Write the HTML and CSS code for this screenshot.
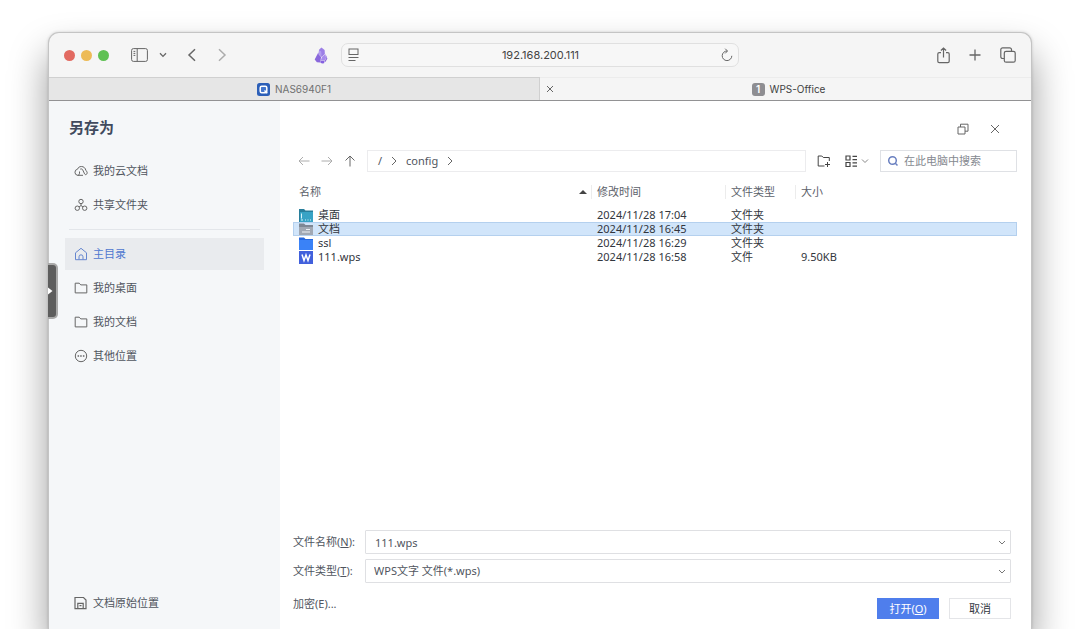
FILE: index.html
```html
<!DOCTYPE html>
<html lang="zh-CN">
<head>
<meta charset="utf-8">
<meta name="viewport" content="width=device-width, initial-scale=1">
<title>WPS-Office</title>
<link rel="stylesheet" href="styles.css">
</head>
<body>
<div class="window">
  <header class="toolbar">
    <div class="toolbar-left">
      <div class="lights"><span class="light red"></span><span class="light yellow"></span><span class="light green"></span></div>
      <button class="icon-btn side-toggle" aria-label="边栏"><svg width="17" height="14" viewBox="0 0 17 14"><rect x=".6" y=".6" width="15.8" height="12.8" rx="1.8"/><path d="M6.2 .6v12.8M2.5 3.4h1.8M2.5 5.4h1.8M2.5 7.4h1.8"/></svg></button>
      <button class="icon-btn side-menu" aria-label="标签页组"><svg width="8" height="6" viewBox="0 0 8 6"><path stroke-width="1.300" d="M1 1.200 4 4.400l3-3.200"/></svg></button>
      <button class="icon-btn nav-btn" aria-label="后退"><svg width="10" height="14" viewBox="0 0 10 14"><path stroke-width="1.500" d="M8 1.300 2 7l6 5.700"/></svg></button>
      <button class="icon-btn nav-btn dim" aria-label="前进"><svg width="10" height="14" viewBox="0 0 10 14"><path stroke-width="1.500" d="m2 1.300 6 5.700-6 5.700"/></svg></button>
      <button class="icon-btn crystal" aria-label="扩展"><svg width="14" height="17" viewBox="0 0 14 17"><path fill="#9c7fe6" d="M7.400.5 10.600 3l.3 4-3.200 3-3-3.200.3-4z"/><path fill="#8a68dc" d="m4.300 5.500.5 2 2.300 2.600-.9 5.500-3.300-.3L.7 12.500z"/><path fill="#b29cf0" d="m5 3.500 2.100.8.5 4.200L4.800 7z"/><path fill="#a88cec" d="m8 10 3.200-2.700 1 3.800-1.600 2.400-3.700-.4z"/><path fill="#8a68dc" d="m11.300 6.500 2.100 5-2 3.400-.8-.9 1.800-3z"/><path fill="#8560e0" d="m6.700 13.400 3.900.4-.5 2.500-2.100.3-1.700-1z"/></svg></button>
    </div>
    <div class="address">
      <svg class="line-icon" width="12" height="14" viewBox="0 0 12 14"><rect x="1" y="1" width="9" height="5.500"/><path d="M.5 9.500h10M.5 12.500h7"/></svg>
      <input class="address-input" type="text" aria-label="地址" value="192.168.200.111">
      <button class="icon-btn reload" aria-label="重新载入"><svg width="12" height="14" viewBox="0 0 12 14"><path d="M10.800 7.800A4.800 4.800 0 1 1 6.200 3M4.200.7 6.500 3 4.200 5.400"/></svg></button>
    </div>
    <div class="toolbar-right">
      <button class="icon-btn" aria-label="共享"><svg width="13" height="17" viewBox="0 0 13 17"><path stroke-width="1.200" d="M4 5.600H2.200A1.400 1.400 0 0 0 .8 7v7.200a1.400 1.400 0 0 0 1.400 1.400h8.600a1.400 1.400 0 0 0 1.400-1.400V7a1.400 1.400 0 0 0-1.400-1.400H9M6.500 10.500V1M3.900 3.500 6.500 1l2.600 2.500"/></svg></button>
      <button class="icon-btn" aria-label="新标签页"><svg width="12" height="12" viewBox="0 0 12 12"><path stroke-width="1.300" d="M6 .5v11M.5 6h11"/></svg></button>
      <button class="icon-btn" aria-label="标签页概览"><svg width="16" height="16" viewBox="0 0 16 16"><rect stroke-width="1.200" x="4.300" y="4.300" width="10.900" height="10.900" rx="1.800"/><path stroke-width="1.200" d="M4 11.500H2.600A1.800 1.800 0 0 1 .8 9.700V2.600A1.800 1.800 0 0 1 2.600.8h7.100a1.800 1.800 0 0 1 1.800 1.800V4"/></svg></button>
    </div>
  </header>

  <nav class="tabs" aria-label="标签页">
    <a class="tab idle" href="#nas"><svg width="13" height="13" viewBox="0 0 13 13"><rect width="13" height="13" rx="2.500" fill="#2c5fb8"/><rect x="3.200" y="3.200" width="6.600" height="6.600" rx="1.500" fill="#4476cc" stroke="#fff" stroke-width="1.500"/><path d="m7.500 7.500 2.800 2.800" stroke="#fff" stroke-width="1.500"/></svg><span>NAS6940F1</span></a>
    <div class="tab current">
      <button class="icon-btn tab-close" aria-label="关闭标签页"><svg width="8" height="8" viewBox="0 0 8 8"><path d="m1 1 6 6M7 1 1 7"/></svg></button>
      <a class="tab-link" href="#wps"><span class="badge">1</span><span>WPS-Office</span></a>
    </div>
  </nav>

  <div class="dialog">
    <aside class="sidebar">
      <h1 class="title">另存为</h1>
      <nav class="places" aria-label="位置">
        <a class="place" href="#cloud"><svg class="line-icon" width="14" height="12" viewBox="0 0 14 12"><path d="M6.200 4.200c.8-.5 1.900-.4 2.400.5l2 4.200c.5 1 1.500 1 2.100.2.800-1 .6-2.800-.8-3.500C11.500 3.100 9.800 1.500 7.400 1.500c-1.900 0-3.300 1-3.900 2.700A3.100 3.100 0 0 0 3.500 10.300H9M3.500 10.300c1.300 0 2-.8 2-2V6.500"/></svg>我的云文档</a>
        <a class="place" href="#shared"><svg class="line-icon" width="14" height="14" viewBox="0 0 14 14"><circle cx="7" cy="3.500" r="2.200"/><circle cx="3.300" cy="10.200" r="2.200"/><circle cx="10.700" cy="10.200" r="2.200"/><path d="M7 5.700v1.800L5 9M7 7.500 9 9"/></svg>共享文件夹</a>
        <hr class="rule">
        <a class="place active" href="#home" aria-current="page"><svg class="line-icon" width="14" height="14" viewBox="0 0 14 14"><path d="M1.500 5.800 7 1.300l5.500 4.500v6.900h-11zM5 12.500V9.800a2 2 0 0 1 4 0v2.700"/></svg>主目录</a>
        <a class="place" href="#desktop"><svg class="line-icon" width="14" height="14" viewBox="0 0 14 14"><path d="M1.200 2.200h4l1.600 1.700h6v8H1.200z"/></svg>我的桌面</a>
        <a class="place" href="#docs"><svg class="line-icon" width="14" height="14" viewBox="0 0 14 14"><path d="M1.200 2.200h4l1.600 1.700h6v8H1.200z"/></svg>我的文档</a>
        <a class="place" href="#other"><svg class="line-icon" width="14" height="14" viewBox="0 0 14 14"><circle cx="7" cy="7" r="5.700"/><path stroke-width="1.500" d="M3.600 7h1.500M6.200 7h1.500M8.900 7h1.500"/></svg>其他位置</a>
      </nav>
      <a class="place origin" href="#origin"><svg class="line-icon" width="14" height="14" viewBox="0 0 14 14"><path stroke-width="1.200" d="M1 1.500h8.500l2.500 2.500v8.700H1zM3.800 12.700V7.300h5.400v5.400M5.500 9.700h2"/></svg>文档原始位置</a>
      <button class="handle" aria-label="展开"><svg width="5" height="8" viewBox="0 0 5 8"><path fill="#fff" d="M0 .5 4.500 4 0 7.500z"/></svg></button>
    </aside>

    <main class="main">
      <div class="dialog-controls">
        <button class="icon-btn" aria-label="还原"><svg width="12" height="12" viewBox="0 0 12 12"><path d="M1 4h7v7H1zM3.500 4V1.200H11v7H8"/></svg></button>
        <button class="icon-btn" aria-label="关闭"><svg width="10" height="10" viewBox="0 0 10 10"><path d="m1 1 8 8M9 1 1 9"/></svg></button>
      </div>

      <div class="path-row">
        <button class="icon-btn dim" aria-label="后退"><svg width="12" height="12" viewBox="0 0 12 12"><path d="M11.500 6H1M5 2 1 6l4 4"/></svg></button>
        <button class="icon-btn dim" aria-label="前进"><svg width="12" height="12" viewBox="0 0 12 12"><path d="M.5 6H11M7 2l4 4-4 4"/></svg></button>
        <button class="icon-btn" aria-label="上一级"><svg width="12" height="12" viewBox="0 0 12 12"><path d="M6 11.500V1M1.500 5.500 6 1l4.500 4.500"/></svg></button>
        <nav class="crumbs" aria-label="路径">
          <a href="#root">/</a><svg class="line-icon" width="6" height="10" viewBox="0 0 6 10"><path d="m1 1 4 4-4 4"/></svg>
          <a href="#config">config</a><svg class="line-icon" width="6" height="10" viewBox="0 0 6 10"><path d="m1 1 4 4-4 4"/></svg>
        </nav>
        <button class="icon-btn dark" aria-label="新建文件夹"><svg width="14" height="14" viewBox="0 0 14 14"><path d="M7.500 12H1.200V2h3.600l1.500 1.500h6V7M10.500 8v5M8 10.500h5"/></svg></button>
        <button class="icon-btn dark view" aria-label="视图"><svg width="24" height="12" viewBox="0 0 24 12"><path stroke-width="1.200" d="M1 1h4v4H1zM1 7.500h4v4H1zM7.500 1.300H12M7.500 4.700H12M7.500 7.800H12M7.500 11.200H12"/><path stroke="#888" d="m17 4.500 3 3 3-3"/></svg></button>
        <label class="search"><svg width="12" height="12" viewBox="0 0 12 12"><circle cx="5.500" cy="5.500" r="3.800"/><path d="m8.300 8.300 2.200 2.200"/></svg><input type="search" aria-label="搜索" placeholder="在此电脑中搜索"></label>
      </div>

      <table class="files">
        <colgroup><col><col class="col-date"><col class="col-type"><col class="col-size"></colgroup>
        <thead>
          <tr>
            <th scope="col"><div class="head first">名称<svg width="8" height="4" viewBox="0 0 8 4"><path fill="#444" d="M0 4 4 0l4 4z"/></svg></div></th>
            <th scope="col"><div class="head">修改时间</div></th>
            <th scope="col"><div class="head">文件类型</div></th>
            <th scope="col"><div class="head">大小</div></th>
          </tr>
        </thead>
        <tbody>
          <tr>
            <td><div class="name"><svg width="14" height="13" viewBox="0 0 14 13"><path fill="#287e9b" d="M0 0h5l1.500 1.500H14V13H0z"/><path fill="#38a3c5" d="M1 3h13v10H1z"/><path stroke="#d9f3fb" d="M2.500 4.500v5M2 11h2M6 11h1M8.500 11h1M11 11h1"/></svg>桌面</div></td>
            <td>2024/11/28 17:04</td><td>文件夹</td><td></td>
          </tr>
          <tr class="selected">
            <td><div class="name"><svg width="14" height="13" viewBox="0 0 14 13"><path fill="#7e8794" d="M0 .5h5L6.500 2H14v11H0z"/><path fill="#a1a8b3" d="M0 4h14v9H0z"/><path stroke="#eef1f5" d="M7 6.500h4M3 9h8"/></svg>文档</div></td>
            <td>2024/11/28 16:45</td><td>文件夹</td><td></td>
          </tr>
          <tr>
            <td><div class="name"><svg width="14" height="13" viewBox="0 0 14 13"><path fill="#2667de" d="M0 .5h5L6.500 2H14v11H0z"/><path fill="#3a82f7" d="M0 3h14v10H0z"/></svg>ssl</div></td>
            <td>2024/11/28 16:29</td><td>文件夹</td><td></td>
          </tr>
          <tr>
            <td><div class="name"><svg width="14" height="13" viewBox="0 0 14 13"><path fill="#4160dc" d="M0 0h14v13H0z"/><path fill="none" stroke="#fff" stroke-width="1.500" d="m3 3.500 2 6 2-5.500 2 5.500 2-6"/></svg>111.wps</div></td>
            <td>2024/11/28 16:58</td><td>文件</td><td>9.50KB</td>
          </tr>
        </tbody>
      </table>

      <form class="save-form">
        <label for="fname">文件名称(<u>N</u>):</label>
        <div class="combo"><input id="fname" type="text" value="111.wps"><svg width="8" height="6" viewBox="0 0 8 6"><path d="m1 1 3 3 3-3"/></svg></div>
        <label for="ftype">文件类型(<u>T</u>):</label>
        <div class="combo"><select id="ftype"><option>WPS文字 文件(*.wps)</option></select><svg width="8" height="6" viewBox="0 0 8 6"><path d="m1 1 3 3 3-3"/></svg></div>
        <div class="actions">
          <button class="encrypt" type="button">加密(E)...</button>
          <button class="btn primary" type="button">打开(<u>O</u>)</button>
          <button class="btn" type="button">取消</button>
        </div>
      </form>
    </main>
  </div>
</div>
</body>
</html>
```

FILE: styles.css
```css
* { box-sizing: border-box; }

body {
  margin: 0;
  height: 100vh;
  padding: 32px 48px 0;
  overflow: hidden;
  display: flex;
  background: #fff;
  color: #50555e;
  font: 11px/14px "Noto Sans", "Noto Sans CJK SC", sans-serif;
}

a { color: inherit; text-decoration: none; }
button, input, select { font: inherit; color: inherit; margin: 0; }
svg { display: block; flex: none; }

.window {
  flex: 1;
  min-width: 0;
  display: flex;
  flex-direction: column;
  border: 1px solid #c4c4c4;
  border-bottom: 0;
  border-radius: 11px 11px 0 0;
  background: #f5f5f5;
  box-shadow: 0 22px 38px rgba(0, 0, 0, .4), 0 0 3px rgba(0, 0, 0, .16);
}

.icon-btn {
  display: flex;
  flex: none;
  padding: 0;
  border: 0;
  background: none;
}
.icon-btn svg, .line-icon { fill: none; stroke: #666; }
.icon-btn.dim svg { stroke: #acacac; }
.icon-btn.dark svg { stroke: #444; }

/* Browser toolbar */
.toolbar {
  height: 44px;
  padding: 0 15px;
  display: grid;
  grid-template-columns: minmax(0, 1fr) minmax(0, 398px) minmax(0, 1fr);
  align-items: center;
}
.toolbar-left { display: flex; align-items: center; }
.lights { display: flex; gap: 6px; margin-right: 22px; }
.light { width: 11px; height: 11px; border-radius: 50%; }
.red { background: #e26a61; }
.yellow { background: #edbb57; }
.green { background: #5fc153; }
.side-menu { margin-left: 11px; }
.nav-btn { margin-left: 20px; }
.crystal { margin-left: auto; margin-right: 13px; }
.icon-btn.crystal svg { stroke: none; }
.toolbar-right { display: flex; align-items: center; justify-content: flex-end; gap: 19px; }

.address {
  height: 24px;
  padding: 0 5px 0 6px;
  display: flex;
  align-items: center;
  border: 1px solid #e0e0e0;
  border-radius: 7px;
  background: #f7f7f7;
}
.address-input {
  flex: 1;
  min-width: 0;
  padding: 0;
  border: 0;
  background: none;
  text-align: center;
  font-family: Inter, sans-serif;
  color: #444;
}

/* Tab strip */
.tabs {
  height: 24px;
  display: grid;
  grid-template-columns: 1fr 1fr;
  border-bottom: 1px solid #929294;
  font: 10px/14px Inter, sans-serif;
}
.tab { display: flex; align-items: center; gap: 5px; }
.idle {
  justify-content: center;
  background: #e6e6e6;
  border: solid #d0d0d0;
  border-width: 1px 1px 0 0;
  color: #707070;
}
.current { border-top: 1px solid #ececec; padding: 0 13px 0 6px; color: #414141; }
.tab-link { flex: 1; display: flex; align-items: center; justify-content: center; gap: 5px; }
.badge {
  width: 13px;
  height: 13px;
  border-radius: 3px;
  background: #8e8e92;
  color: #fff;
  font-weight: 600;
  line-height: 13px;
  text-align: center;
}

/* Dialog */
.dialog { flex: 1; min-height: 0; display: flex; background: #fff; }

.sidebar {
  position: relative;
  width: 231px;
  flex: none;
  padding: 14px 16px 10px;
  display: flex;
  flex-direction: column;
  background: #f5f7f9;
}
.title { margin: 0 0 16px 4px; font-size: 15px; line-height: 24px; font-weight: 700; color: #414a5e; }
.places { display: flex; flex-direction: column; gap: 2px; }
.place {
  height: 32px;
  padding: 0 9px;
  display: flex;
  align-items: center;
  gap: 5px;
}
.active { background: #e9ebee; color: #5078d0; }
.active .line-icon { stroke: #6586cf; }
.rule { width: 100%; margin: 6px 0; padding: 0 4px; border: 0; height: 1px; background: #e3e6ea content-box; }
.origin { margin-top: auto; }
.handle {
  position: absolute;
  left: -1px;
  top: 162px;
  width: 10px;
  height: 56px;
  padding: 0;
  display: flex;
  align-items: center;
  border: solid #a9a9a9;
  border-width: 2px 2px 2px 0;
  border-radius: 0 5px 5px 0;
  background: #5d5d5d;
}

.main {
  flex: 1;
  min-width: 0;
  padding: 0 14px 10px 13px;
  display: flex;
  flex-direction: column;
}
.dialog-controls {
  height: 49px;
  padding: 6px 17px 0 0;
  display: flex;
  align-items: center;
  justify-content: flex-end;
  gap: 21px;
}

.path-row { height: 22px; padding-left: 5px; display: flex; align-items: center; gap: 11px; }
.crumbs {
  flex: 1;
  height: 22px;
  padding: 0 10px;
  display: flex;
  align-items: center;
  gap: 9px;
  border: 1px solid #ececee;
}
.view { margin-left: 3px; }
.search {
  width: 137px;
  height: 22px;
  padding: 0 6px;
  display: flex;
  align-items: center;
  gap: 5px;
  border: 1px solid #dfe1e5;
}
.search svg { fill: none; stroke: #6a80c0; stroke-width: 1.5; }
.search input { flex: 1; min-width: 0; padding: 0; border: 0; background: none; outline: 0; }
.search input::placeholder { color: #858990; }

.files { width: 100%; table-layout: fixed; border-collapse: collapse; }
.files th { height: 36px; padding: 4px 0 0; font-weight: 400; text-align: left; color: #5c616a; }
.files td { height: 14px; padding: 0 0 0 6px; line-height: 14px; color: #32363d; white-space: nowrap; }
.col-date { width: 134px; }
.col-type { width: 70px; }
.col-size { width: 222px; }
.head { padding-left: 5px; border-left: 1px solid #ececec; display: flex; align-items: center; line-height: 14px; }
.first { justify-content: space-between; padding-right: 4px; border-left-color: transparent; }
.name { height: 14px; display: flex; align-items: center; gap: 5px; }
.selected { background: #d1e5fa; outline: 1px solid #b4d0ee; outline-offset: -1px; }

.save-form {
  margin-top: auto;
  padding-right: 6px;
  display: grid;
  grid-template-columns: 72px minmax(0, 1fr);
  row-gap: 5px;
  align-items: center;
}
.combo { position: relative; }
.combo input, .combo select {
  display: block;
  width: 100%;
  height: 24px;
  padding: 0 24px 0 9px;
  border: 1px solid #dfe0e3;
  border-radius: 1px;
  background: #fff;
  appearance: none;
}
.combo select { padding-left: 8px; }
.combo svg {
  position: absolute;
  right: 5px;
  top: 10px;
  fill: none;
  stroke: #777;
  pointer-events: none;
}
.actions { grid-column: 1 / -1; margin-top: 10px; display: flex; gap: 10px; }
.encrypt { margin-right: auto; padding: 0; height: 12px; border: 0; background: none; line-height: 12px; }
.btn { width: 62px; height: 21px; padding: 0; border: 1px solid #e4e5e8; background: #fff; color: #33373f; }
.primary { border-color: #4f7eec; background: #4f7eec; color: #fff; }
```
